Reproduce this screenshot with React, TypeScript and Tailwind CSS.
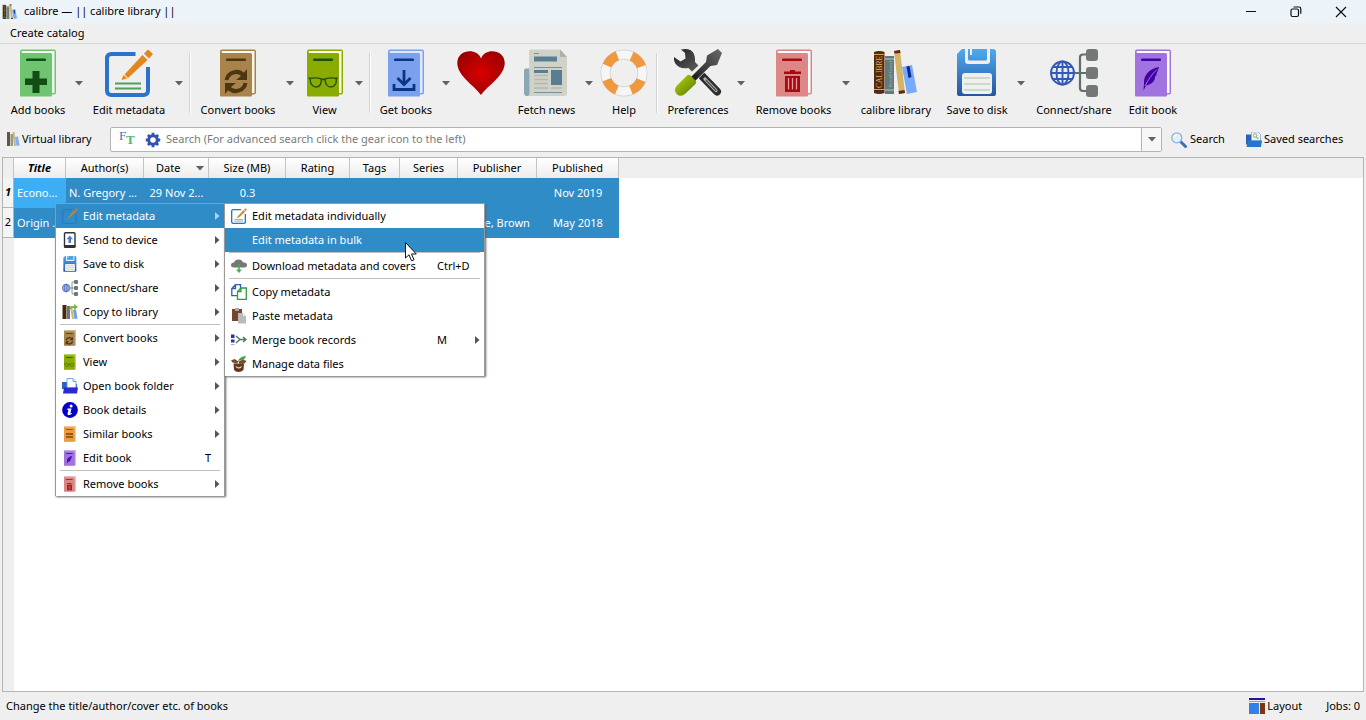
import React from "react";
import type { ReactNode } from "react";

type IconProps = { className?: string };
type Icon = (props: IconProps) => ReactNode;

function Book({ className, cover, dark, light = "#fff", children }: IconProps & { cover: string; dark: string; light?: string; children?: ReactNode }) {
  return (
    <svg viewBox="0 0 48 48" className={className} aria-hidden="true">
      <rect x="6" y="0.5" width="36" height="45" rx="2" fill={cover} />
      <path d="M8 2h32.500v42H38V5.500Q38 4 36.500 4H8Q7 3 8 2z" fill={light} />
      <path d="M6 2q0 2.500 2 2.500h28.500q1.500 0 1.500 1.500v40.500q0 1-1 1H7q-1 0-1-1z" fill={cover} />
      <rect x="12" y="9.500" width="20" height="2.500" rx="1" fill={dark} />
      {children}
    </svg>
  );
}

const AddIcon: Icon = (p) => (
  <Book {...p} cover="#6fc56f" dark="#124d14" light="#effff0">
    <path d="M18.500 22h7v7.500H33v6.500h-7.500v8h-7v-8H11v-6.500h7.500z" fill="#124d14" />
  </Book>
);
const ConvertIcon: Icon = (p) => (
  <Book {...p} cover="#a8834b" dark="#4c3713" light="#fff8e8">
    <g fill="none" stroke="#4c3713" strokeWidth="4">
      <path d="M12.500 31c1.500-8 12-11 17-4.500" />
      <path d="M31.500 34c-1.500 8-12 11-17 4.500" />
    </g>
    <path d="M33 20v11H22l5-4zM11 45V34h11l-5 4z" fill="#4c3713" />
  </Book>
);
const ViewIcon: Icon = (p) => (
  <Book {...p} cover="#8aac00" dark="#185008" light="#fbffe5">
    <g fill="none" stroke="#27540c" strokeWidth="1.400">
      <path d="M9 29.500q6-1.500 11.500.5 0 8-5.500 8T9 29.500zM24 30q6-2 11.500-.5 0 8.500-5.500 8.500T24 30z" />
      <path d="M20.500 31q1.750-1.500 3.500 0M7.500 28.500l2 1.500M36.500 28.500l-2 1.500" />
    </g>
  </Book>
);
const StoreIcon: Icon = (p) => (
  <Book {...p} cover="#7ba1ee" dark="#063684" light="#dfeaff">
    <path d="M22 21v14M15.500 29l6.500 6.500L28.500 29M12 35v5.500h20V35" fill="none" stroke="#063684" strokeWidth="2.800" />
  </Book>
);
const RemoveIcon: Icon = (p) => (
  <Book {...p} cover="#dc8686" dark="#a50b10">
    <path d="M14 25h17v-2.500h-6V21h-5v1.500h-6zM15 27h15v16H15z" fill="#a50b10" />
    <path d="M18.500 29v11.500M22.500 29v11.500M26.500 29v11.500" stroke="#e49b9b" strokeWidth="1.300" />
  </Book>
);
const FeatherIcon: Icon = (p) => (
  <Book {...p} cover="#a173e0" dark="#4300a4">
    <path d="M30 18c-9 1.500-15.500 8-15 16l-.5 7.500 2.500-5c8-1.500 9.500-7 9-9.500l2.500-1-1.500-.5c1.500-2.500 2.500-5 3-7.500z" fill="#4300a4" />
    <path d="M28 20.500C23 25 19 31 16 37" stroke="#a173e0" strokeWidth="1" fill="none" />
  </Book>
);
const SimilarIcon: Icon = (p) => (
  <Book {...p} cover="#e99b40" dark="#824300">
    <path d="M12 22h21v4H12zM12 31h21v4H12z" fill="#824300" />
  </Book>
);

const EditIcon: Icon = ({ className }) => (
  <svg viewBox="0 0 48 48" className={className} aria-hidden="true">
    <path d="M30.500 5H6.500Q2 5 2 9.500v32Q2 46 6.500 46h32q4.500 0 4.500-4.500V18" fill="none" stroke="#2b72ca" strokeWidth="4" />
    <path d="M10 34.500h26M10 39.500h26" stroke="#4da260" strokeWidth="2" />
    <path d="M37.500 6l5 5-19.500 18-3.500-3.500zM18.500 26l3.500 3.500-5.500 1.500zM39 4.500L43 .5 48 5l-4 4.500z" fill="#e4861e" />
  </svg>
);
const HeartIcon: Icon = ({ className }) => (
  <svg viewBox="0 0 48 48" className={className} aria-hidden="true">
    <defs>
      <radialGradient id="heart" cx=".5" cy=".5" r=".6">
        <stop offset="0" stopColor="#d80000" />
        <stop offset="1" stopColor="#990000" />
      </radialGradient>
    </defs>
    <path d="M24 46C17 36 0 27 .3 13.500.8 0 20-1.500 24 9.500 28-1.500 47.200 0 47.700 13.500 48 27 31 36 24 46z" fill="url(#heart)" />
  </svg>
);
const NewsIcon: Icon = ({ className }) => (
  <svg viewBox="0 0 48 48" className={className} aria-hidden="true">
    <path d="M1 21.500q0-2 2-2h4V47H4q-3 0-3-3z" fill="#8aa7b2" />
    <path d="M6 2q0-1.500 1.500-1.500H37L44 8v36.500Q44 47 41 47H5q1.500-1 1.500-3z" fill="#d0d2c8" />
    <path d="M37 .5L44 8h-7z" fill="#aeb1a7" />
    <path d="M11 7.500h23v5H11zM11 21h14v3H11zM28 21h11v15H28z" fill="#587e94" />
    <path d="M11 4.500h5M11 18.500h28M11 43.500h28" stroke="#7292a0" strokeWidth="1" />
    <path d="M11 26.500h14M11 30.500h14M11 34.500h14M11 39h14M28 39h11" stroke="#b5b8b0" strokeWidth="1.300" />
  </svg>
);
const HelpIcon: Icon = ({ className }) => (
  <svg viewBox="0 0 48 48" className={className} aria-hidden="true">
    <circle cx="24" cy="24" r="18.500" fill="none" stroke="#cfcfcf" strokeWidth="10" />
    <circle cx="24" cy="24" r="18.500" fill="none" stroke="#f6f6f6" strokeWidth="8.500" />
    <circle cx="24" cy="24" r="18.500" fill="none" stroke="#ef983f" strokeWidth="9.500" strokeDasharray="14.530 14.530" strokeDashoffset="-7.260" />
  </svg>
);
const ToolsIcon: Icon = ({ className }) => (
  <svg viewBox="0 0 48 48" className={className} aria-hidden="true">
    <defs>
      <linearGradient id="steel" x1="0" y1="0" x2="1" y2="1">
        <stop offset="0" stopColor="#1f1f1f" />
        <stop offset="1" stopColor="#606060" />
      </linearGradient>
      <linearGradient id="blade" x1="1" y1="0" x2="0" y2="1">
        <stop offset="0" stopColor="#6a6a6a" />
        <stop offset=".6" stopColor="#383838" />
        <stop offset="1" stopColor="#111" />
      </linearGradient>
      <linearGradient id="lime" x1="0" y1="0" x2="1" y2="1">
        <stop offset="0" stopColor="#b9d812" />
        <stop offset="1" stopColor="#577400" />
      </linearGradient>
    </defs>
    <path d="M7 .500Q17-1.500 20 5q1.500 4 1 8l3.500 3.500-6.500 6-3.500-3.500Q5 20.500 1 14q-1.500-3-1-6l6.500 4.500 5-3L11 4z" fill="url(#steel)" />
    <path d="M28.500 27.500L43 42.500" stroke="#2d2d2d" strokeWidth="8" strokeLinecap="round" />
    <path d="M31 30l11 11.500" stroke="#bdbdbd" strokeWidth="3.200" strokeLinecap="round" />
    <path d="M32 31l10 10.500" stroke="#4b4b4b" strokeWidth="1.400" strokeLinecap="round" />
    <path d="M32 12L15 29l5 5 17-17z" fill="#efefef" />
    <path d="M44 0l4 4-5 12-6.500 1L19 34l-4-4 17-17 1-6.500z" fill="url(#blade)" />
    <path d="M13 26.500q1.500-1.500 3.500 0l5 5q1.500 1.500 0 3.500L11.500 44.500q-4.500 4-8.500 1-4-4-.5-8.500z" fill="url(#lime)" />
  </svg>
);
const LibraryIcon: Icon = ({ className }) => (
  <svg viewBox="0 0 48 48" className={className} aria-hidden="true">
    <path d="M2 3q5-2 10.500 0v41q-5.500 2-10.500 0z" fill="#512a10" />
    <path d="M2 5.500h10.500M2 40.500h10.500" stroke="#dca342" strokeWidth="1" />
    <text x="9.700" y="39" transform="rotate(-90 9.700 39)" fontSize="7.500" fontFamily="Liberation Serif, serif" fill="#e0b365">CALIBRE</text>
    <path d="M13 7h9v38h-9z" fill="#637b78" />
    <path d="M13 10h9M13 41h9" stroke="#bdc9c6" strokeWidth="1" />
    <text x="19.500" y="38" transform="rotate(-90 19.500 38)" fontSize="5" fontFamily="Liberation Serif, serif" fill="#a9bab6">Kovid Goyal</text>
    <path d="M22 2l6-1 5 43-6 1z" fill="#d6b466" />
    <path d="M22 2l6-1 .5 3-6 .5zM26.500 42l6-1 .5 3-6 1z" fill="#612911" />
    <path d="M30 18l10-2 5 27-10 2z" fill="#77a9fc" />
    <path d="M34.500 17.500l3-.500 2 11-3 1z" fill="#08289a" />
  </svg>
);
const ShelfIcon: Icon = ({ className }) => (
  <svg viewBox="0 0 14 16" className={className} aria-hidden="true">
    <path d="M1 1h3v14H1z" fill="#6b5240" />
    <path d="M4.500 3h2.500v12H4.500z" fill="#8c9c99" />
    <path d="M6.500 1h2l1.500 14H8z" fill="#cdb27a" />
    <path d="M9 6l3-.5L13.500 14.500l-3 .5z" fill="#84adf3" />
  </svg>
);
const DiskIcon: Icon = ({ className }) => (
  <svg viewBox="0 0 48 48" className={className} aria-hidden="true">
    <defs>
      <linearGradient id="disk" x1="0" y1="0" x2="0" y2="1">
        <stop offset="0" stopColor="#4eaaef" />
        <stop offset="1" stopColor="#2655a0" />
      </linearGradient>
    </defs>
    <path d="M9 0h31q3 0 3 3v42q0 2-2 2H6q-2 0-2-2V5z" fill="url(#disk)" />
    <path d="M12 0v12q0 3 3 3h19q3 0 3-3V0h-3v10q0 1.500-1.500 1.500h-16Q15 11.500 15 10V0zM17 0h2v6h-2z" fill="#efefef" />
    <rect x="9" y="24" width="30" height="21" rx="3" fill="#efefef" />
    <path d="M11 29h26M11 35h26M11 41h26" stroke="#a5c9a1" strokeWidth="1.200" />
  </svg>
);
const ShareIcon: Icon = ({ className }) => (
  <svg viewBox="0 0 48 48" className={className} aria-hidden="true">
    <path d="M36 5.500h-3q-3 0-3 3V39q0 3 3 3h5M22 24h15" stroke="#59706b" strokeWidth="2.200" fill="none" />
    <g fill="#737876">
      <rect x="36" y="0" width="12" height="12" rx="3" />
      <rect x="36" y="18" width="12" height="12" rx="3" />
      <rect x="36" y="36" width="12" height="12" rx="3" />
    </g>
    <circle cx="12.500" cy="24" r="12" fill="#e4ecff" />
    <g fill="none" stroke="#3558b4" strokeWidth="1.900">
      <circle cx="12.500" cy="24" r="11.500" />
      <ellipse cx="12.500" cy="24" rx="6" ry="11.500" />
      <path d="M12.500 12v24M1 24h23M3 18h19M3 30h19" />
    </g>
  </svg>
);
const DeviceIcon: Icon = ({ className }) => (
  <svg viewBox="0 0 16 16" className={className} aria-hidden="true">
    <rect x="2.500" y=".700" width="10.500" height="14.600" rx="1" fill="#fff" stroke="#333" strokeWidth="1.400" />
    <path d="M2 13h11.500v2.500H2z" fill="#333" />
    <path d="M7.750 3.500l3.200 3.700H9V11H6.500V7.200h-2z" fill="#3f82d7" />
  </svg>
);
const CopyLibraryIcon: Icon = ({ className }) => (
  <svg viewBox="0 0 16 16" className={className} aria-hidden="true">
    <path d="M.500 1h4v14h-4z" fill="#4a260f" />
    <path d="M5 2h3v13H5z" fill="#627874" />
    <path d="M8 2h2l2 13h-2z" fill="#d5b568" />
    <path d="M11 6l3-.5 1.500 9-3 .5z" fill="#6c9df5" />
    <path d="M7 6q1-4 5-4V0l4 3-4 3V4Q9 4 7 6z" fill="#70b94c" />
  </svg>
);
const FolderIcon: Icon = ({ className }) => (
  <svg viewBox="0 0 16 16" className={className} aria-hidden="true">
    <path d="M0 4h6l1 2h8v5H0z" fill="#2865bd" />
    <path d="M5 .500h6l3 3V10H5z" fill="#fff" stroke="#5e92da" strokeWidth=".800" />
    <path d="M11 .500v3h3" fill="#d8e8ff" stroke="#5e92da" strokeWidth=".800" />
    <path d="M2 9.500h14l-1 6H1z" fill="#2b29d5" />
  </svg>
);
const InfoIcon: Icon = ({ className }) => (
  <svg viewBox="0 0 16 16" className={className} aria-hidden="true">
    <circle cx="8" cy="8" r="7.900" fill="#0202cb" />
    <circle cx="9.100" cy="3.900" r="1.500" fill="#fff" />
    <path d="M5.500 6.500h4L8.300 11.500l1.700-.500-.2 1q-4.800 2.500-4.200-.500l.8-3.500H5.300z" fill="#fff" />
  </svg>
);
const CloudIcon: Icon = ({ className }) => (
  <svg viewBox="0 0 16 16" className={className} aria-hidden="true">
    <path d="M3 9.500q-3 0-3-2.500t3-2.500q1-3 4.500-3t4.500 3q4-.500 4 2.500t-3 2.500z" fill="#777" />
    <path d="M7.200 6h1.600v5.500H11L8 15l-3-3.500h2.200z" fill="#48ae54" />
  </svg>
);
const CopyIcon: Icon = ({ className }) => (
  <svg viewBox="0 0 16 16" className={className} aria-hidden="true">
    <path d="M4.500 .700h5v11H.800V4.500zM4.500 .700v3.800H.800" fill="#fff" stroke="#315da9" strokeWidth="1.300" />
    <path d="M10 4h5.300v11.300H6.500V7.500zM10 4v3.500H6.500" fill="#fff" stroke="#359948" strokeWidth="1.300" />
  </svg>
);
const PasteIcon: Icon = ({ className }) => (
  <svg viewBox="0 0 16 16" className={className} aria-hidden="true">
    <path d="M1 1h10v12H1z" fill="#76452e" />
    <path d="M4 0h4v3H4z" fill="#aaa" />
    <path d="M7 5h5l3 3v7.500H7z" fill="#bbb" />
    <path d="M12 5v3h3z" fill="#eee" />
  </svg>
);
const MergeIcon: Icon = ({ className }) => (
  <svg viewBox="0 0 16 16" className={className} aria-hidden="true">
    <path d="M0 2.500h3.500V6H0zM0 7.500h3.500v3H0z" fill="#30329d" />
    <path d="M0 12h3.500v1H0z" fill="#aaa" />
    <path d="M5 4l4 3.500L5 11M8 7.500h7M12 5l3 2.500-3 2.500" fill="none" stroke="#4e7a5d" strokeWidth="1.400" />
  </svg>
);
const DataIcon: Icon = ({ className }) => (
  <svg viewBox="0 0 16 16" className={className} aria-hidden="true">
    <path d="M2.500 7.500h10.500L12.500 14q-2 2-5 2t-4.500-2z" fill="#65371d" />
    <path d="M0 4.500L3.500 3l4 2.500-1.500 2L1.500 6.500zM7.500 5.500L12 3.500l3.500 1.500-2 2.500-5 .500z" fill="#7d4928" />
    <path d="M7 5.500Q8 .500 15 0q-1.500 5-6.500 4.500z" fill="#4c9e52" />
    <path d="M5 10.500q2.750 3 5.500 0" stroke="#fff" strokeWidth="1.100" fill="none" />
  </svg>
);
const SearchIcon: Icon = ({ className }) => (
  <svg viewBox="0 0 16 16" className={className} aria-hidden="true">
    <path d="M9.500 9.500l5 5" stroke="#3972b9" strokeWidth="3" strokeLinecap="round" />
    <circle cx="5.800" cy="5.800" r="5" fill="#e2edf7" stroke="#8fb3dc" strokeWidth="1.300" />
    <path d="M3 6q0-3 3-3" stroke="#fff" strokeWidth="1.200" fill="none" />
  </svg>
);
const SavedIcon: Icon = ({ className }) => (
  <svg viewBox="0 0 16 16" className={className} aria-hidden="true">
    <path d="M0 2.500h5l1 2h9v8H0z" fill="#2864b4" />
    <path d="M5.500 0h6.500l2.500 2.500V9h-9z" fill="#eef5f0" stroke="#93afcc" strokeWidth=".800" />
    <circle cx="9" cy="3.500" r="1.800" fill="none" stroke="#76ad80" strokeWidth=".900" />
    <path d="M10.500 5l2 2" stroke="#4b9656" strokeWidth="1" />
    <path d="M2 8.500h14L15 15H.500z" fill="#2474d5" />
  </svg>
);
const LayoutIcon: Icon = ({ className }) => (
  <svg viewBox="0 0 16 16" className={className} aria-hidden="true">
    <path d="M0 0h16v2H0z" fill="#2910a3" />
    <path d="M0 3h16v1H0z" fill="#e48772" />
    <path d="M0 5h10v11H0z" fill="#337fe8" />
    <path d="M11 5h5v11h-5z" fill="#7d350d" />
  </svg>
);
const GearIcon: Icon = ({ className }) => (
  <svg viewBox="0 0 16 16" className={className} aria-hidden="true">
    <g fill="none" stroke="#3452ae">
      <circle cx="8" cy="8" r="4.300" strokeWidth="3" />
      <path d="M8 .800v2.400M8 12.800v2.400M.800 8h2.400M12.800 8h2.400M2.900 2.900l1.700 1.700M11.400 11.400l1.700 1.700M2.900 13.100l1.700-1.700M11.400 4.600l1.700-1.700" strokeWidth="2.800" />
    </g>
  </svg>
);

function DownArrow() {
  return (
    <svg viewBox="0 0 8 5" className="h-[5px] w-2" aria-hidden="true">
      <path d="M0 0h8L4 4.500z" fill="#606060" />
    </svg>
  );
}

type Tool = { label?: string; name?: string; icon: Icon; width: string; menu?: boolean; rule?: string };

const tools: Tool[] = [
  { label: "Add books", icon: AddIcon, width: "w-[62px]", menu: true },
  { label: "Edit metadata", icon: EditIcon, width: "w-20", menu: true, rule: "w-[7px]" },
  { label: "Convert books", icon: ConvertIcon, width: "w-[84px]", menu: true },
  { label: "View", icon: ViewIcon, width: "w-[49px]", menu: true, rule: "w-[7px]" },
  { label: "Get books", icon: StoreIcon, width: "w-[60px]", menu: true },
  { name: "Donate", icon: HeartIcon, width: "w-[50px]" },
  { label: "Fetch news", icon: NewsIcon, width: "ml-2 w-[65px]", menu: true },
  { label: "Help", icon: HelpIcon, width: "w-[50px]", rule: "w-4 pl-[7px]" },
  { label: "Preferences", icon: ToolsIcon, width: "w-[66px]", menu: true },
  { label: "Remove books", icon: RemoveIcon, width: "w-[85px]", menu: true },
  { label: "calibre library", icon: LibraryIcon, width: "w-20" },
  { label: "Save to disk", icon: DiskIcon, width: "ml-[7px] w-[68px]", menu: true },
  { label: "Connect/share", icon: ShareIcon, width: "w-[86px]" },
  { label: "Edit book", icon: FeatherIcon, width: "w-[72px]" },
];

function Toolbar() {
  return (
    <nav className="flex h-20 shrink-0 items-start pt-[5px] pl-[7px]" aria-label="Main toolbar">
      {tools.map(({ label, name, icon: ToolIcon, width, menu, rule }) => (
        <React.Fragment key={label ?? name}>
          <button aria-label={name} className={`flex shrink-0 flex-col items-center gap-[5px] whitespace-nowrap ${width}`}>
            <ToolIcon className="size-12 shrink-0 overflow-visible" />
            {label && <span className="leading-4">{label}</span>}
          </button>
          {menu && (
            <button aria-label={`${label} options`} className="flex h-[68px] w-5 shrink-0 items-center justify-center">
              <DownArrow />
            </button>
          )}
          {rule && (
            <span className={`flex h-16 shrink-0 pt-1 ${rule}`}>
              <span className="w-0.5 border-l border-[#d2d2d2] bg-white" />
            </span>
          )}
        </React.Fragment>
      ))}
    </nav>
  );
}

function SearchBar() {
  return (
    <div className="flex h-[33px] shrink-0 items-start pt-[3px] pr-[22px] pl-1.5">
      <button className="flex h-6 w-[104px] shrink-0 items-center gap-0.5 whitespace-nowrap">
        <ShelfIcon className="h-4 w-3.5 shrink-0" />
        Virtual library
      </button>
      <div className="flex h-[25px] min-w-0 flex-1 rounded-[2px] border border-[#b4b4b4] bg-white">
        <button aria-label="Full text search" className="flex w-8 shrink-0 pl-2 font-['Liberation_Serif',serif] text-[13px] leading-4">
          <span className="h-4 w-[7px] text-[#3778bd]">F</span>
          <span className="mt-1 h-4 font-bold text-[#50b66b]">T</span>
        </button>
        <button aria-label="Advanced search" className="flex w-[18px] shrink-0 items-center pl-0.5">
          <GearIcon className="size-4 shrink-0" />
        </button>
        <input
          aria-label="Search books"
          className="min-w-0 flex-1 pl-[5px] text-black outline-none placeholder:text-[#7a7a7a]"
          placeholder="Search (For advanced search click the gear icon to the left)"
        />
        <button aria-label="Search history" className="flex w-5 shrink-0 items-center justify-center border-l border-[#b4b4b4] bg-[#f7f7f7]">
          <DownArrow />
        </button>
      </div>
      <button className="ml-[9px] flex h-[25px] w-[75px] shrink-0 items-center gap-[3px] whitespace-nowrap">
        <SearchIcon className="size-4 shrink-0" />
        Search
      </button>
      <button className="flex h-[25px] w-[98px] shrink-0 items-center gap-0.5 whitespace-nowrap">
        <SavedIcon className="size-4 shrink-0" />
        Saved searches
      </button>
    </div>
  );
}

const columns = [
  { name: "Title", width: "w-[52px]" },
  { name: "Author(s)", width: "w-[78px]" },
  { name: "Date", width: "w-[65px]" },
  { name: "Size (MB)", width: "w-[77px]" },
  { name: "Rating", width: "w-16" },
  { name: "Tags", width: "w-[50px]" },
  { name: "Series", width: "w-[58px]" },
  { name: "Publisher", width: "w-[79px]" },
  { name: "Published", width: "w-[82px]" },
];

const books = [
  ["Econo...", "N. Gregory ...", "29 Nov 2...", "0.3", "", "", "", "", "Nov 2019"],
  ["Origin ...", "", "", "", "", "", "", "Little, Brown", "May 2018"],
];

function BookList() {
  return (
    <main className="mr-0.5 ml-0.5 flex min-h-0 flex-1 flex-col overflow-hidden border border-[#b4b4b4] bg-[linear-gradient(to_right,#efefef_11px,white_11px)]">
      <div className="bg-[linear-gradient(to_bottom,#efefef_20px,transparent_20px)]">
        <table className="w-[616px] table-fixed border-separate border-spacing-0">
          <thead>
            <tr className="h-5">
              <th aria-label="Row" className="w-[11px] border-r border-[#c4c4c4] p-0" />
              {columns.map(({ name, width }) => (
                <th
                  key={name}
                  className={`border-r border-[#c4c4c4] bg-linear-to-b from-white to-[#ececec] p-0 leading-4 ${width} ${name === "Title" ? "font-bold italic" : "font-normal"}`}
                >
                  {name === "Date" ? (
                    <span className="flex items-center justify-between pr-1 pl-3">
                      Date
                      <DownArrow />
                    </span>
                  ) : (
                    name
                  )}
                </th>
              ))}
            </tr>
          </thead>
          <tbody>
            {books.map((cells, row) => (
              <tr key={row} className="h-[30px] bg-[#308cc6] text-white">
                <th className={`border-r border-b border-[#b4b4b4] bg-[#f4f4f4] p-0 text-black ${row === 0 ? "font-bold italic" : "font-normal"}`}>{row + 1}</th>
                {cells.map((text, i) => (
                  <td key={i} className={`overflow-hidden p-0 whitespace-nowrap ${i < 2 ? "pl-[3px] text-left" : "text-center"} ${row === 0 && i === 0 ? "bg-[#3daef3]" : ""}`}>
                    {text}
                  </td>
                ))}
              </tr>
            ))}
          </tbody>
        </table>
      </div>
    </main>
  );
}

type Entry = { label: string; icon?: Icon; sub?: boolean; keys?: string; active?: boolean; rule?: boolean };

const bookMenu: Entry[] = [
  { label: "Edit metadata", icon: EditIcon, sub: true, active: true },
  { label: "Send to device", icon: DeviceIcon, sub: true },
  { label: "Save to disk", icon: DiskIcon, sub: true },
  { label: "Connect/share", icon: ShareIcon, sub: true },
  { label: "Copy to library", icon: CopyLibraryIcon, sub: true, rule: true },
  { label: "Convert books", icon: ConvertIcon, sub: true },
  { label: "View", icon: ViewIcon, sub: true },
  { label: "Open book folder", icon: FolderIcon, sub: true },
  { label: "Book details", icon: InfoIcon, sub: true },
  { label: "Similar books", icon: SimilarIcon, sub: true },
  { label: "Edit book", icon: FeatherIcon, keys: "T", rule: true },
  { label: "Remove books", icon: RemoveIcon, sub: true },
];

const metadataMenu: Entry[] = [
  { label: "Edit metadata individually", icon: EditIcon },
  { label: "Edit metadata in bulk", active: true, rule: true },
  { label: "Download metadata and covers", icon: CloudIcon, keys: "Ctrl+D", rule: true },
  { label: "Copy metadata", icon: CopyIcon },
  { label: "Paste metadata", icon: PasteIcon },
  { label: "Merge book records", icon: MergeIcon, keys: "M", sub: true },
  { label: "Manage data files", icon: DataIcon },
];

function Menu({ entries, className, keysWidth }: { entries: Entry[]; className: string; keysWidth: string }) {
  return (
    <div role="menu" className={`absolute border border-b-0 border-[#999] bg-white shadow-[1px_1px_2px_#666] ${className}`}>
      {entries.map(({ label, icon: EntryIcon, sub, keys, active, rule }) => (
        <React.Fragment key={label}>
          <button role="menuitem" className={`flex h-6 w-full items-center pl-1.5 whitespace-nowrap ${active ? "bg-[#308cc6] text-white" : ""}`}>
            <span className="mr-[5px] size-4 shrink-0">
              {EntryIcon && <EntryIcon className={`size-4 overflow-visible ${active ? "opacity-70" : ""}`} />}
            </span>
            <span className="flex-1 text-left">{label}</span>
            {keys && <span className={`text-left ${keysWidth}`}>{keys}</span>}
            <span className="flex w-[11px] items-center pl-0.5">
              {sub && (
                <svg viewBox="0 0 5 8" className="h-2 w-[5px]" aria-hidden="true">
                  <path d="M0 0l4.500 4L0 8z" fill={active ? "#a7d5f3" : "#555"} />
                </svg>
              )}
            </span>
          </button>
          {rule && <hr className="mx-1 mb-px border-[#c0c0c0]" />}
        </React.Fragment>
      ))}
    </div>
  );
}

export default function App() {
  return (
    <div className="relative flex h-screen flex-col overflow-hidden bg-[#efefef] font-['Noto_Sans','Open_Sans',sans-serif] text-[11px] text-black">
      <header className="flex h-[23px] shrink-0 items-center bg-[#ecf4f9] pr-[3px] pl-0.5">
        <LibraryIcon className="size-4" />
        <h1 className="ml-1.5 flex-1">calibre — || calibre library ||</h1>
        <div className="flex">
          <button aria-label="Minimize" className="flex h-5 w-[45px] items-center justify-center">
            <svg viewBox="0 0 12 12" className="size-3"><path d="M1 5.500h10" stroke="#111" /></svg>
          </button>
          <button aria-label="Restore" className="flex h-5 w-[45px] items-center justify-center">
            <svg viewBox="0 0 12 12" className="size-3" fill="none" stroke="#111" strokeWidth="1.200">
              <rect x="1" y="3" width="7.500" height="7.500" rx="1.500" />
              <path d="M3.500 1H9q1.800 0 1.800 1.800v5" />
            </svg>
          </button>
          <button aria-label="Close" className="flex h-5 w-[45px] items-center justify-center">
            <svg viewBox="0 0 12 12" className="size-3"><path d="M1 1l10 10M11 1L1 11" stroke="#111" strokeWidth="1.200" /></svg>
          </button>
        </div>
      </header>
      <div className="flex h-[21px] shrink-0 items-center border-b border-[#d3d8d6] pl-2.5">
        <button>Create catalog</button>
      </div>
      <Toolbar />
      <SearchBar />
      <BookList />
      <footer className="flex h-7 shrink-0 items-center pr-1 pl-1.5">
        <span className="flex-1">Change the title/author/cover etc. of books</span>
        <button className="mr-6 flex items-center gap-0.5">
          <LayoutIcon className="size-4" />
          Layout
        </button>
        <button className="pr-0.5">Jobs: 0</button>
      </footer>
      <Menu entries={bookMenu} className="top-[203px] left-[55px] w-[170px]" keysWidth="w-2" />
      <Menu entries={metadataMenu} className="top-[203px] left-[224px] w-[261px]" keysWidth="w-9" />
      <svg viewBox="0 0 12 20" className="pointer-events-none absolute top-[242px] left-[405px] h-5 w-3" aria-hidden="true">
        <path d="M.500.500v15.500l3.500-3.200 2.500 6 2.500-1-2.500-5.800h4.800z" fill="#fff" stroke="#111" />
      </svg>
    </div>
  );
}
